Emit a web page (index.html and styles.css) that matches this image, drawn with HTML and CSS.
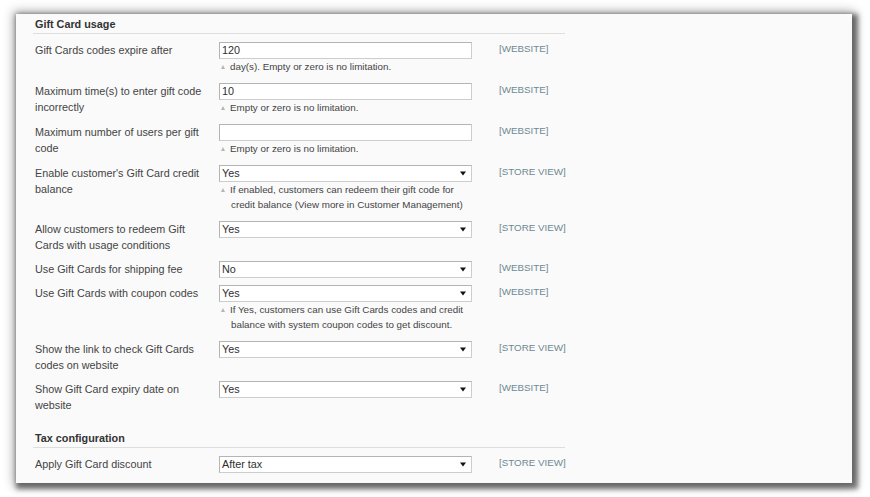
FILE: index.html
```html
<!DOCTYPE html>
<html>
<head>
<meta charset="utf-8">
<link rel="stylesheet" href="styles.css">
</head>
<body>
<div class="panel">
  <div class="form">
    <h4 class="group-head">Gift Card usage</h4>

    <div class="row">
      <div class="label">Gift Cards codes expire after</div>
      <div class="value">
        <div class="input">120</div>
        <p class="note">day(s). Empty or zero is no limitation.</p>
      </div>
      <div class="scope">[WEBSITE]</div>
    </div>

    <div class="row">
      <div class="label">Maximum time(s) to enter gift code incorrectly</div>
      <div class="value">
        <div class="input">10</div>
        <p class="note">Empty or zero is no limitation.</p>
      </div>
      <div class="scope">[WEBSITE]</div>
    </div>

    <div class="row">
      <div class="label">Maximum number of users per gift code</div>
      <div class="value">
        <div class="input"></div>
        <p class="note">Empty or zero is no limitation.</p>
      </div>
      <div class="scope">[WEBSITE]</div>
    </div>

    <div class="row">
      <div class="label">Enable customer's Gift Card credit balance</div>
      <div class="value">
        <div class="select"><span>Yes</span><svg class="arrow" width="6" height="5" viewBox="0 0 6 5"><path d="M0 0.5H6L3 4.5Z" fill="#111"/></svg></div>
        <p class="note">If enabled, customers can redeem their gift code for credit balance (View more in Customer Management)</p>
      </div>
      <div class="scope">[STORE VIEW]</div>
    </div>

    <div class="row">
      <div class="label">Allow customers to redeem Gift Cards with usage conditions</div>
      <div class="value">
        <div class="select"><span>Yes</span><svg class="arrow" width="6" height="5" viewBox="0 0 6 5"><path d="M0 0.5H6L3 4.5Z" fill="#111"/></svg></div>
      </div>
      <div class="scope">[STORE VIEW]</div>
    </div>

    <div class="row">
      <div class="label">Use Gift Cards for shipping fee</div>
      <div class="value">
        <div class="select"><span>No</span><svg class="arrow" width="6" height="5" viewBox="0 0 6 5"><path d="M0 0.5H6L3 4.5Z" fill="#111"/></svg></div>
      </div>
      <div class="scope">[WEBSITE]</div>
    </div>

    <div class="row">
      <div class="label">Use Gift Cards with coupon codes</div>
      <div class="value">
        <div class="select"><span>Yes</span><svg class="arrow" width="6" height="5" viewBox="0 0 6 5"><path d="M0 0.5H6L3 4.5Z" fill="#111"/></svg></div>
        <p class="note">If Yes, customers can use Gift Cards codes and credit balance with system coupon codes to get discount.</p>
      </div>
      <div class="scope">[WEBSITE]</div>
    </div>

    <div class="row">
      <div class="label">Show the link to check Gift Cards codes on website</div>
      <div class="value">
        <div class="select"><span>Yes</span><svg class="arrow" width="6" height="5" viewBox="0 0 6 5"><path d="M0 0.5H6L3 4.5Z" fill="#111"/></svg></div>
      </div>
      <div class="scope">[STORE VIEW]</div>
    </div>

    <div class="row">
      <div class="label">Show Gift Card expiry date on website</div>
      <div class="value">
        <div class="select"><span>Yes</span><svg class="arrow" width="6" height="5" viewBox="0 0 6 5"><path d="M0 0.5H6L3 4.5Z" fill="#111"/></svg></div>
      </div>
      <div class="scope">[WEBSITE]</div>
    </div>

    <h4 class="group-head second">Tax configuration</h4>

    <div class="row">
      <div class="label">Apply Gift Card discount</div>
      <div class="value">
        <div class="select"><span>After tax</span><svg class="arrow" width="6" height="5" viewBox="0 0 6 5"><path d="M0 0.5H6L3 4.5Z" fill="#111"/></svg></div>
      </div>
      <div class="scope">[STORE VIEW]</div>
    </div>
  </div>
</div>
</body>
</html>
```
FILE: styles.css
```css
html, body {
  margin: 0;
  padding: 0;
  background: #ffffff;
}

body {
  font-family: "Liberation Sans", Arial, sans-serif;
  color: #444444;
  height: 497px;
  overflow: hidden;
}

.panel {
  box-sizing: border-box;
  margin: 14px 18px 0 16px;
  height: 469px;
  background: #fafafa;
  box-shadow: 3px 3px 5px 3px rgba(0, 0, 0, 0.5), 0 0 10px 3px rgba(0, 0, 0, 0.28);
  padding-left: 17px;
}

.form {
  width: 532px;
}

.group-head {
  margin: 0 0 1px 0;
  padding: 2px 2px 1px 2px;
  font-size: 10.8px;
  line-height: 16px;
  font-weight: bold;
  color: #333333;
  border-bottom: 1px solid #dedede;
}

.group-head.second {
  margin-top: 14px;
}

.row {
  display: grid;
  grid-template-columns: 184px 253px auto;
  padding: 7px 0 0 2px;
}

.label {
  font-size: 10.8px;
  line-height: 16px;
  padding: 0 14px 1px 0;
  color: #444444;
}

.value {
  min-width: 0;
}

.input,
.select {
  box-sizing: border-box;
  height: 17px;
  background: #ffffff;
  border: 1px solid;
  border-color: #b4b4b4 #cdcdcd #cdcdcd #b4b4b4;
  font-size: 10.8px;
  line-height: 15px;
  padding: 0 2px;
  color: #2f2f2f;
}

.select {
  display: flex;
  align-items: center;
  justify-content: space-between;
  padding-right: 5px;
}

.arrow {
  display: block;
  flex: none;
}

.note {
  margin: 0;
  padding: 0 0 2px 12px;
  font-size: 9.8px;
  line-height: 15px;
  color: #444444;
}

.note::before {
  content: "";
  display: inline-block;
  width: 0;
  height: 0;
  margin-left: -10px;
  margin-right: 5px;
  border-left: 2.5px solid transparent;
  border-right: 2.5px solid transparent;
  border-bottom: 4px solid #b5b5b5;
  vertical-align: 1px;
}

.scope {
  margin-left: 27px;
  font-size: 9.8px;
  line-height: 13px;
  color: #6f8992;
  white-space: nowrap;
}
```
